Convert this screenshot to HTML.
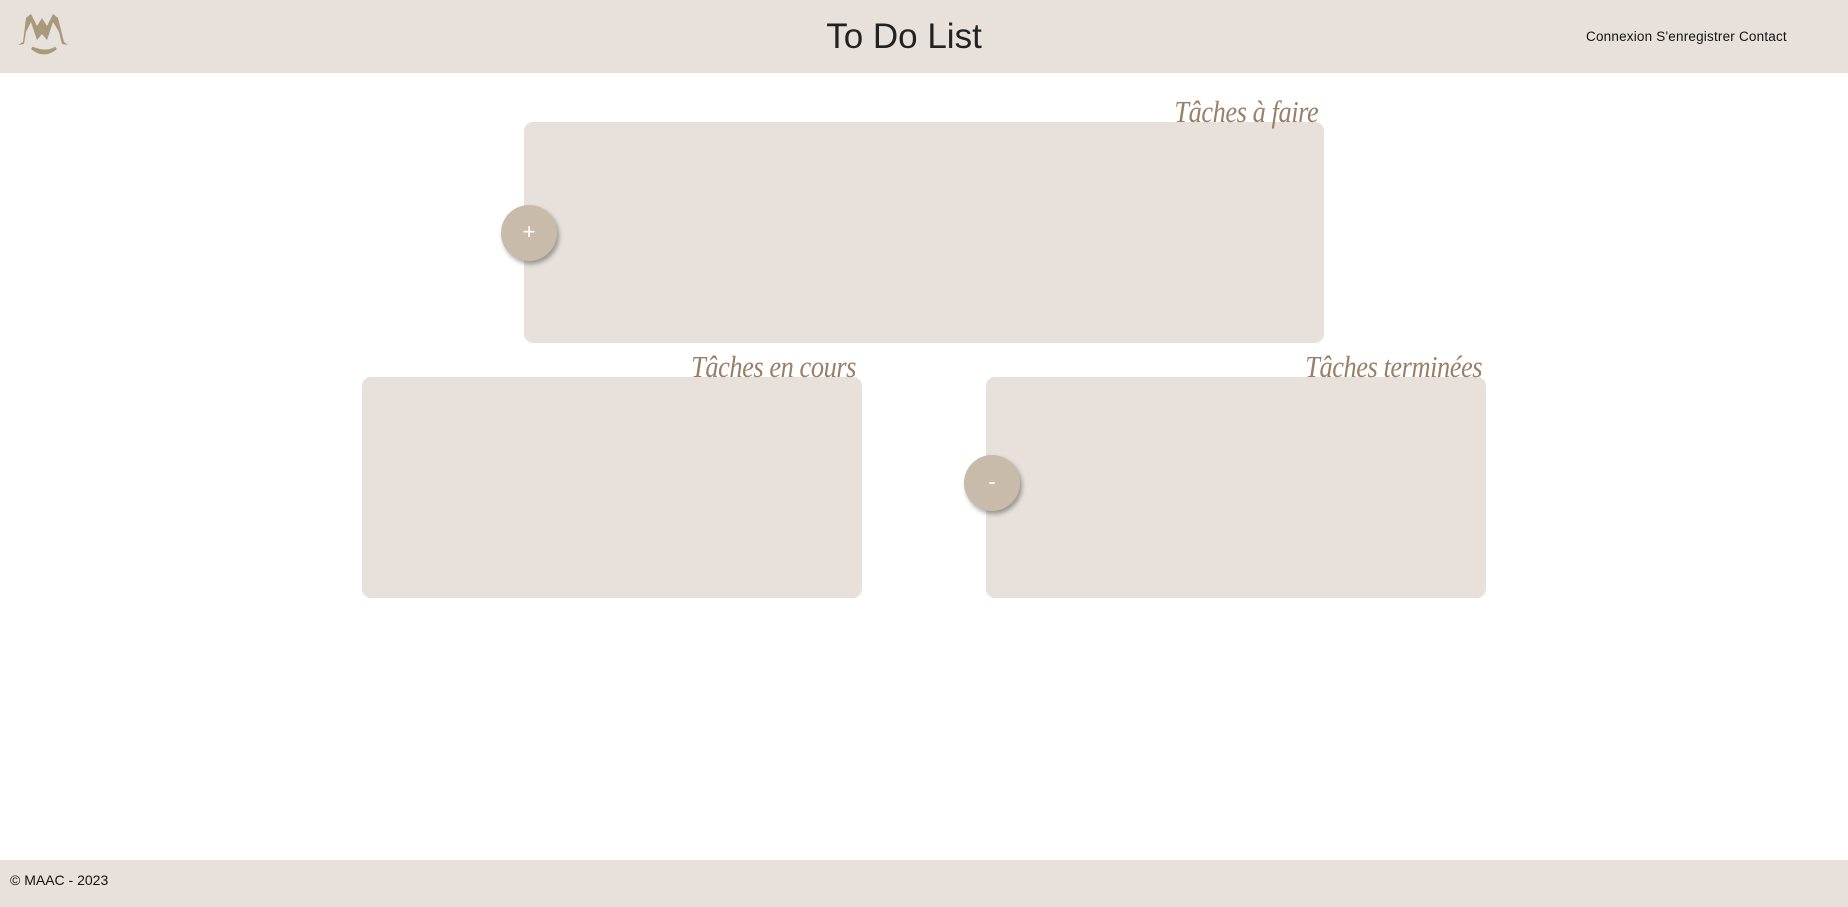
<!DOCTYPE html>
<html><head><meta charset="utf-8"><style>
*{margin:0;padding:0;box-sizing:border-box}
body{width:1848px;height:907px;background:#fff;font-family:"Liberation Sans",sans-serif;position:relative;overflow:hidden}
header{position:absolute;left:0;top:0;width:1848px;height:73px;background:#e8e1db}
.title{position:absolute;left:0;width:1808px;text-align:center;top:17px;font-size:35px;color:#222;font-weight:300}
nav{position:absolute;left:1586px;top:29px;font-size:13.5px;color:#111;letter-spacing:0.2px}
.box{position:absolute;background:#e8e1db;border-radius:9px}
.lbl{position:absolute;font-family:"Liberation Serif",serif;font-style:italic;color:#9a7f66;font-size:31px;text-align:right;letter-spacing:-0.5px;transform:scaleX(0.85);transform-origin:right}
.btn{position:absolute;width:56px;height:56px;border-radius:50%;background:#c8bba9;color:#fff;font-size:22px;text-align:center;line-height:54px;box-shadow:2px 3px 5px rgba(0,0,0,.35)}
footer{position:absolute;left:0;top:860px;width:1848px;height:47px;background:#e8e1db;font-size:14px;color:#111;padding:12px 10px}
</style></head><body>
<header>
<svg style="position:absolute;left:18px;top:12px" width="52" height="50" viewBox="0 0 52 50">
<g fill="#a8997a"><path d="M8 6 L13 2 L19 14 L24 6 L29 14 L35 2 L40 6 L46 30 L50 33 L44 32 L41 20 L35 10 L29 28 L24 22 L19 28 L13 10 L8 20 L6 32 L0 33 L5 30Z"/><path d="M14 36 Q26 46 38 36 Q28 42 14 36Z" stroke="#a8997a" stroke-width="3"/></g></svg>
<div class="title">To Do List</div>
<nav>Connexion S'enregistrer Contact</nav>
</header>
<div class="box" style="left:524px;top:122px;width:800px;height:221px"></div>
<div class="lbl" style="right:530px;top:94px">Tâches à faire</div>
<div class="btn" style="left:501px;top:205px">+</div>
<div class="box" style="left:362px;top:377px;width:500px;height:221px"></div>
<div class="lbl" style="right:992px;top:349px">Tâches en cours</div>
<div class="box" style="left:986px;top:377px;width:500px;height:221px"></div>
<div class="lbl" style="right:366px;top:349px">Tâches terminées</div>
<div class="btn" style="left:964px;top:455px">-</div>
<footer>© MAAC - 2023</footer>
</body></html>
